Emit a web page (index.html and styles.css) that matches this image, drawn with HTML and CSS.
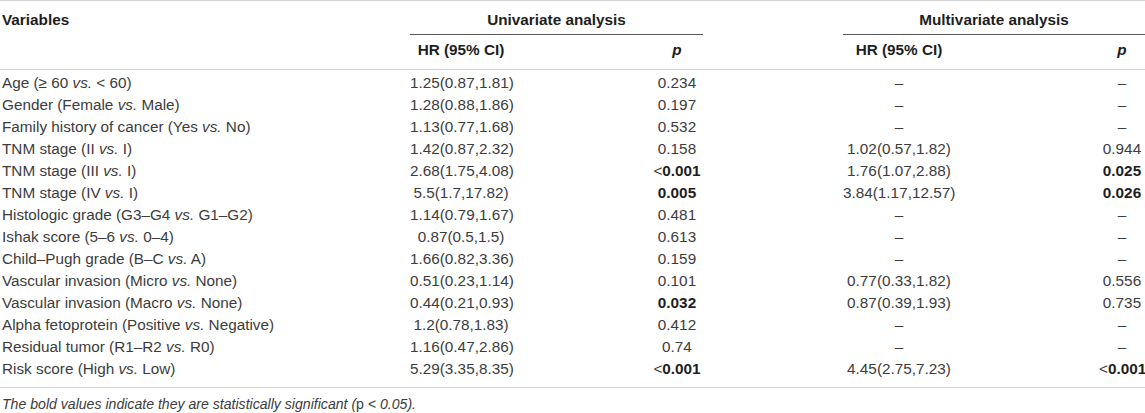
FILE: index.html
```html
<!DOCTYPE html>
<html>
<head>
<meta charset="utf-8">
<link rel="stylesheet" href="styles.css">
</head>
<body>
<table class="tbl">
  <colgroup>
    <col class="c-var"><col class="c-hr1"><col class="c-sp1"><col class="c-p1"><col class="c-sp2"><col class="c-hr2"><col class="c-sp3"><col class="c-p2">
  </colgroup>
  <thead>
    <tr class="h1">
      <th rowspan="2" class="var-h">Variables</th>
      <th colspan="3" class="span">Univariate analysis</th>
      <th></th>
      <th colspan="3" class="span">Multivariate analysis</th>
    </tr>
    <tr class="h2">
      <th>HR (95% CI)</th><th></th><th><i>p</i></th><th></th>
      <th>HR (95% CI)</th><th></th><th><i>p</i></th>
    </tr>
  </thead>
  <tbody>
    <tr><td class="var">Age (≥ 60 <i>vs.</i> &lt; 60)</td><td>1.25(0.87,1.81)</td><td></td><td>0.234</td><td></td><td>–</td><td></td><td>–</td></tr>
    <tr><td class="var">Gender (Female <i>vs.</i> Male)</td><td>1.28(0.88,1.86)</td><td></td><td>0.197</td><td></td><td>–</td><td></td><td>–</td></tr>
    <tr><td class="var">Family history of cancer (Yes <i>vs.</i> No)</td><td>1.13(0.77,1.68)</td><td></td><td>0.532</td><td></td><td>–</td><td></td><td>–</td></tr>
    <tr><td class="var">TNM stage (II <i>vs.</i> I)</td><td>1.42(0.87,2.32)</td><td></td><td>0.158</td><td></td><td>1.02(0.57,1.82)</td><td></td><td>0.944</td></tr>
    <tr><td class="var">TNM stage (III <i>vs.</i> I)</td><td>2.68(1.75,4.08)</td><td></td><td>&lt;<b>0.001</b></td><td></td><td>1.76(1.07,2.88)</td><td></td><td><b>0.025</b></td></tr>
    <tr><td class="var">TNM stage (IV <i>vs.</i> I)</td><td>5.5(1.7,17.82)</td><td></td><td><b>0.005</b></td><td></td><td>3.84(1.17,12.57)</td><td></td><td><b>0.026</b></td></tr>
    <tr><td class="var">Histologic grade (G3–G4 <i>vs.</i> G1–G2)</td><td>1.14(0.79,1.67)</td><td></td><td>0.481</td><td></td><td>–</td><td></td><td>–</td></tr>
    <tr><td class="var">Ishak score (5–6 <i>vs.</i> 0–4)</td><td>0.87(0.5,1.5)</td><td></td><td>0.613</td><td></td><td>–</td><td></td><td>–</td></tr>
    <tr><td class="var">Child–Pugh grade (B–C <i>vs.</i> A)</td><td>1.66(0.82,3.36)</td><td></td><td>0.159</td><td></td><td>–</td><td></td><td>–</td></tr>
    <tr><td class="var">Vascular invasion (Micro <i>vs.</i> None)</td><td>0.51(0.23,1.14)</td><td></td><td>0.101</td><td></td><td>0.77(0.33,1.82)</td><td></td><td>0.556</td></tr>
    <tr><td class="var">Vascular invasion (Macro <i>vs.</i> None)</td><td>0.44(0.21,0.93)</td><td></td><td><b>0.032</b></td><td></td><td>0.87(0.39,1.93)</td><td></td><td>0.735</td></tr>
    <tr><td class="var">Alpha fetoprotein (Positive <i>vs.</i> Negative)</td><td>1.2(0.78,1.83)</td><td></td><td>0.412</td><td></td><td>–</td><td></td><td>–</td></tr>
    <tr><td class="var">Residual tumor (R1–R2 <i>vs.</i> R0)</td><td>1.16(0.47,2.86)</td><td></td><td>0.74</td><td></td><td>–</td><td></td><td>–</td></tr>
    <tr><td class="var">Risk score (High <i>vs.</i> Low)</td><td>5.29(3.35,8.35)</td><td></td><td>&lt;<b>0.001</b></td><td></td><td>4.45(2.75,7.23)</td><td></td><td>&lt;<b>0.001</b></td></tr>
  </tbody>
</table>
<p class="note">The bold values indicate they are statistically significant (<span class="up">p</span> &lt; 0.05).</p>
</body>
</html>
```

FILE: styles.css
```css
html, body {
  margin: 0;
  padding: 0;
  background: #fff;
}
body {
  font-family: "Liberation Sans", Arial, sans-serif;
  font-size: 15.3px;
  color: #3c3c3c;
}
.tbl {
  width: 1145px;
  border-collapse: collapse;
  table-layout: fixed;
  border-top: 1px solid #d4d4d4;
  border-bottom: 1px solid #d4d4d4;
}
.c-var { width: 410px; }
.c-hr1 { width: 102px; }
.c-sp1 { width: 139px; }
.c-p1 { width: 52px; }
.c-sp2 { width: 140px; }
.c-hr2 { width: 112px; }
.c-sp3 { width: 144px; }
.c-p2 { width: 46px; }

th, td {
  padding: 0;
  line-height: 22px;
  text-align: center;
  white-space: nowrap;
  font-weight: normal;
}
th {
  font-weight: bold;
  color: #1e1e1e;
}
.h1 th {
  padding: 8px 0 3px;
  vertical-align: top;
}
.h1 .span {
  border-bottom: 1px solid #5a5a5a;
}
.var-h {
  text-align: left;
  padding-left: 2px !important;
}
.h2 th {
  padding: 4px 0 8px;
}
thead {
  border-bottom: 1px solid #d4d4d4;
}
tbody tr:first-child td {
  padding-top: 2px;
}
tbody tr:last-child td {
  padding-bottom: 7px;
}
td.var {
  text-align: left;
  padding-left: 2px;
}
b {
  color: #1e1e1e;
}
.note {
  margin: 8px 0 0 2px;
  font-size: 14.1px;
  line-height: 16px;
  font-style: italic;
  color: #3c3c3c;
}
.note .up {
  font-style: normal;
}
```
